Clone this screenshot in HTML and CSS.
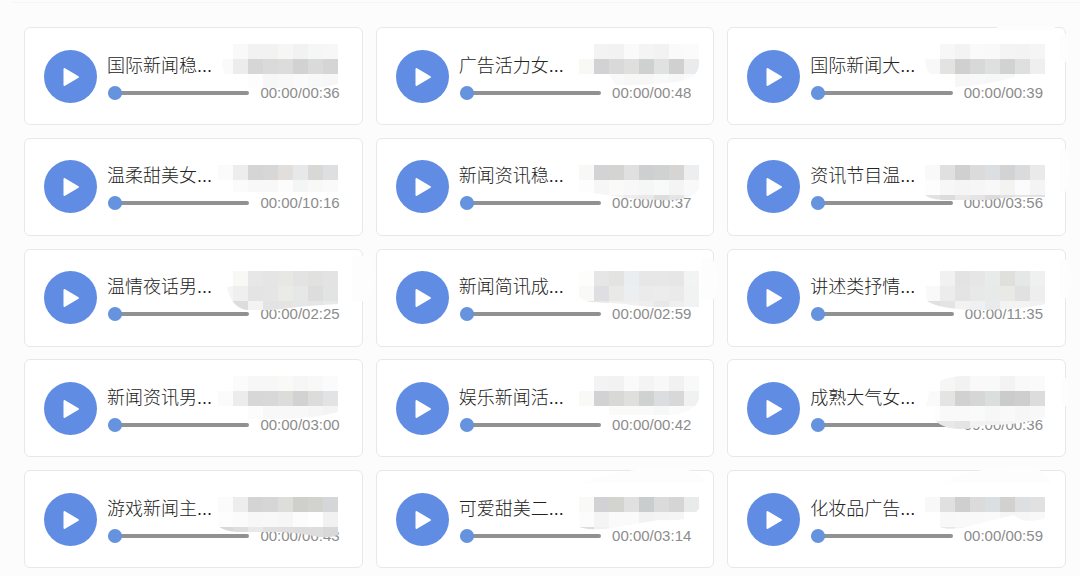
FILE: index.html
```html
<!DOCTYPE html>
<html lang="zh-CN">
<head>
<meta charset="utf-8">
<meta name="viewport" content="width=device-width, initial-scale=1">
<title>音频样音</title>
<link rel="stylesheet" href="styles.css">
</head>
<body>
<main class="page">
<ul class="grid" id="samples"></ul>
</main>
<script src="app.js"></script>
</body>
</html>
```

FILE: styles.css
```css
* {
  box-sizing: border-box;
}

body {
  margin: 0;
  background: #fcfcfc;
  font-family: "Liberation Sans", "Noto Sans CJK SC", sans-serif;
}

.page {
  min-height: 100vh;
  display: flex;
  flex-direction: column;
}

.page::before {
  content: "";
  height: 1px;
  margin: 2px 0 24px 12px;
  background: #f5f5f5;
}

.grid {
  flex: 1;
  display: grid;
  grid-template-columns: repeat(3, minmax(0, 1fr));
  align-content: space-between;
  gap: 12px 13px;
  margin: 0;
  padding: 0 14px 8px 24px;
  list-style: none;
}

.card {
  position: relative;
  display: flex;
  align-items: center;
  gap: 10px;
  height: 98px;
  padding: 0 22px 0 19px;
  background: #fff;
  border: 1px solid #e8e8e8;
  border-radius: 6px;
}

.play {
  flex: none;
  width: 53px;
  height: 53px;
  padding: 0;
  border: 0;
  border-radius: 50%;
  background: #608de3;
  cursor: pointer;
}

.play svg {
  display: block;
}

.body {
  flex: 1;
  min-width: 0;
  display: flex;
  flex-direction: column;
  gap: 6px;
  padding-top: 3px;
}

.title {
  margin: 0;
  font-size: 18px;
  line-height: 24px;
  font-weight: 300;
  color: #222;
  white-space: nowrap;
}

.progress {
  display: flex;
  align-items: center;
  gap: 11px;
  height: 18px;
}

.seek {
  appearance: none;
  flex: 1;
  min-width: 0;
  height: 14px;
  margin: 0 0 0 1px;
  background: transparent;
}

.seek::-webkit-slider-runnable-track {
  height: 4px;
  border-radius: 2px;
  background: #8f9193;
}

.seek::-webkit-slider-thumb {
  appearance: none;
  width: 14px;
  height: 14px;
  margin-top: -5px;
  border-radius: 50%;
  background: #6593dd;
}

.time {
  font-size: 15px;
  line-height: 18px;
  color: #8c8c8c;
}

.mosaic {
  position: absolute;
  top: 0;
  left: -1px;
  width: 100%;
  height: 100%;
  overflow: visible;
  pointer-events: none;
}

.wash {
  fill: #fdfdfd;
}
```

FILE: app.js
```js
// Each sample: title, duration, mosaic top, rows of cell shades ("-" is an empty cell),
// outline of the mosaic, and an optional pale stroke across the card edge.
const samples = [
  ["国际新闻稳...", "00:36", 16,
    ["- f9 f2 f2 f6f6f4 f2 f5f7f7 f7", "fa ec d6 da dc d2 da d5", "- - fd f6f8f8 f8 fa f7f8f8 f7"],
    "M209 16H314V56Q300 60 285 60H224V46H201Q197 38 199 31H209Z"],
  ["广告活力女...", "00:48", 16,
    ["- f3 f2 fa f4 f2 fa fb", "f8f8f4 d2d2d4 d9 dfdfdd cfd0d0 e0e2e2 d0 eaebed", "- - f9 f7 f7 f9 f7 fa"],
    "M203 16H323V36Q323 43 317 48Q308 54 290 55Q262 58 240 57L233 46H203Z"],
  ["国际新闻大...", "00:39", 16,
    ["- f7 f3 fa f9 f4 f3 f5", "f8 e3e3e1 d0 d8 dedfdf d2 dde0df ef", "- - f7 f8 f7 f8 - -"],
    "M213 16H319V46H300Q260 58 228 59V46H203Q198 40 198 31H213Z",
    "M270 -2H328V2H270ZM333 6H341V34H333Z"],
  ["温柔甜美女...", "10:16", 26,
    ["fb ed d5 d7 e2dedb e6e8ea d8d8d7 dedfe1", "- fb f8 f8 fc f4f6f6 f8f8f6 fa"],
    "M194 26H314V53H194Z"],
  ["新闻资讯稳...", "00:37", 26,
    ["f8f8f6 d3d3d5 d4d4d2 e0 cdcfd0 d0d2d2 d6d5d4 eceef0", "fd f6 fafaf8 f8 f6 f8f9f9 f4 f9", "- - f2 ed e9 dd e5 f4"],
    "M203 26H323V50Q321 54 312 58Q300 62 285 61Q250 60 238 57L203 52Z"],
  ["资讯节目温...", "03:56", 26,
    ["f9 e0 d0 db dbdfe1 d3 dadbdd ea", "fd f7 f5 f6 f8 f3f3f2 fb f4", "e2 dc e8 e4 db e1 e4 e0"],
    "M198 26H319V58Q285 57 262 61H215Q202 60 198 56Z",
    "M333 10H338Q349 28 338 54H333Z"],
  ["温情夜话男...", "02:25", 21,
    ["- f8f8f6 e7 e5 e7e7e4 e3 e1e1df e3", "f5 ef e4 e5 eaeae7 e6e8e7 dd e1e4e3", "dd dd f3 e3 e4 e6 e5 e9"],
    "M209 21H314V54Q275 56 250 60H222Q207 57 203 37L209 36Z",
    "M328 6H345Q357 27 345 51H328Z"],
  ["新闻简讯成...", "02:59", 21,
    ["fdfdfb e6 e3e3e1 ebeef0 e7 e7 e6 f2f4f4", "f9f9f7 dfdfe3 e9e9e7 eceff1 eb ec ea f1f2f2", "e6 e8 f0 f0 ee e8 ef f2"],
    "M203 21H323V57H278Q260 56 250 54L215 52Q205 50 203 46Z",
    "M325 8H336Q348 30 337 50H325Z"],
  ["讲述类抒情...", "11:35", 21,
    ["- f1 e3 e6 e9ebea dfdfdc e6e8e7 f0", "f9 ec e4 e8 e7eae9 e9e9e6 e1 ee", "e0 e4 f2 eff0f1 e8eaec f3 f3 f1"],
    "M213 21H319V54Q290 60 255 60Q214 60 200 51L198 36H213Z",
    "M333 10H340Q350 27 340 48H333Z"],
  ["新闻资讯男...", "03:00", 16,
    ["- fbfbfa f7 f7 f9f9f7 f6 f8 fb", "fb ec d7 d8 dcdcda d2 dcdcda e2e3e5", "- - fc f8 f8 f8 f6 f4"],
    "M209 16H314V52Q290 59 254 59H224V46H194V31H209Z"],
  ["娱乐新闻活...", "00:42", 16,
    ["- f3 f2 fa f4 f8 f1 f9", "f9f9f5 d2d2d5 d8d8d6 dfdfdd d0d2d2 dcdde0 d8 f0f2f2", "- - fa fa fa f7 fb fa"],
    "M203 16H323V36Q323 43 319 46Q307 56 290 55H233V46H203Z"],
  ["成熟大气女...", "00:36", 16,
    ["- f6 f2 f9 f9 f3 f9 fa", "fa e4e4e2 d1 d6 dadfde cb ce dc", "fd f9 f9 fa f7 f9 f6 f8", "e8 e8 e4 f2 f1 f4 f8 f8"],
    "M215 20Q230 15 245 16H319V57Q290 66 260 65Q238 71 222 68Q211 65 206 58L209 46H199L202 32Z",
    "M334 18H340V46H334Z"],
  ["游戏新闻主...", "00:43", 26,
    ["fb ed d4 d6 dddddb cfcfcc d2d2cf d5d6d8", "fd fb f7 f8 f6 fc fe f1", "d8 de e9 e0 df dd dd d8"],
    "M194 26H314V64Q304 68 290 65Q270 61 250 61H212Q200 60 194 55Z"],
  ["可爱甜美二...", "03:14", 26,
    ["f9f9f7 d2d2d6 d3d3d0 e0 cacdce db d5 e8ebea", "fc f4 fa fa f1f2f1 f4 f5 -", "dd f0 f8 f8 - - - -"],
    "M203 26H323V38Q321 41 317 42V47Q298 50 282 49L236 57Q215 60 203 56Z",
    "M203 12Q255 -5 300 -3Q327 0 328 12Z"],
  ["化妆品广告...", "00:59", 26,
    ["f8 e0 cf db dadfe1 d3d1cf dedfe1 e1", "- f8 f9 f9 fa f6 f6 f8", "- e8 f4 f8 - - - -"],
    "M198 26H319V47Q297 54 287 44Q262 50 235 57Q220 59 213 56V41H198Z",
    "M213 12Q250 -5 300 -5Q315 -4 324 12Z"]
];

const columnStart = [194, 203, 198];
const cell = 15;

function mosaic(sample, index) {
  const [, , top, rows, outline, wash] = sample;
  const cells = rows.map((row, r) => row.split(" ").map((shade, c) => {
    if (shade === "-") return "";
    const fill = shade.length === 2 ? shade.repeat(3) : shade;
    const x = columnStart[index % 3] + c * cell;
    return `<rect x="${x}" y="${top + r * cell}" width="${cell}" height="${cell}" fill="#${fill}"/>`;
  }).join("")).join("");
  return `<svg class="mosaic" aria-hidden="true">
    ${wash ? `<path class="wash" d="${wash}"/>` : ""}
    <clipPath id="outline${index}"><path d="${outline}"/></clipPath>
    <g clip-path="url(#outline${index})" shape-rendering="crispEdges">${cells}</g>
  </svg>`;
}

document.getElementById("samples").innerHTML = samples.map((sample, index) => `
  <li class="card">
    <button class="play" type="button" aria-label="播放 ${sample[0]}">
      <svg width="53" height="53" viewBox="0 0 53 53" aria-hidden="true">
        <path d="M20.5 19V35L34 27Z" fill="#fff" stroke="#fff" stroke-width="2" stroke-linejoin="round"/>
      </svg>
    </button>
    <div class="body">
      <h2 class="title" id="title${index}">${sample[0]}</h2>
      <div class="progress">
        <input class="seek" type="range" min="0" max="100" value="0" aria-labelledby="title${index}">
        <span class="time">00:00/${sample[1]}</span>
      </div>
    </div>
    ${mosaic(sample, index)}
  </li>`).join("");
```
